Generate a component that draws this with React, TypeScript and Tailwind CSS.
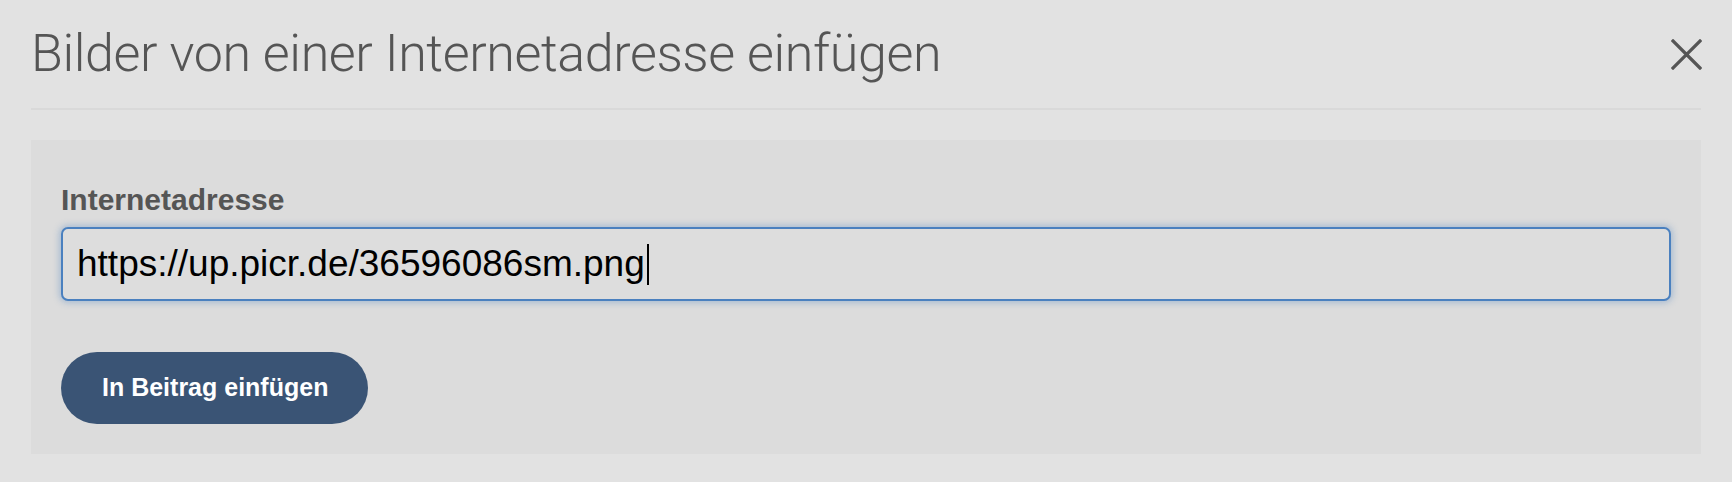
export default function App() {
  return (
    <div className="h-[482px] w-full bg-[#e2e2e2] px-[31px] font-['Liberation_Sans',Arial,sans-serif]">
      {/* header */}
      <div className="flex h-[110px] items-center justify-between border-b-2 border-[#d9d9d9]">
        <h1 className="font-['Roboto',sans-serif] text-[52px] font-light leading-[60px] tracking-[-0.4px] text-[#555555]">
          Bilder von einer Internetadresse einfügen
        </h1>
        <button className="mr-[-1px] flex h-[31px] w-[31px] items-center justify-center text-[#555555]">
          <svg width="31" height="31" viewBox="0 0 31 31" fill="none" stroke="currentColor" strokeWidth="3.2" strokeLinecap="square">
            <path d="M2 2L29 29M29 2L2 29" />
          </svg>
        </button>
      </div>

      {/* form panel */}
      <div className="mt-[30px] h-[314px] bg-[#dcdcdc] px-[30px] pt-[45px]">
        <label className="block text-[30px] font-bold leading-[30px] text-[#555555]">Internetadresse</label>
        <div className="mt-[12px] flex h-[74px] items-center rounded-[7px] border-2 border-[#4a80bf] bg-[#dddddd] pl-[14px] shadow-[0_0_6px_2px_rgba(74,128,191,0.35)]">
          <span className="text-[37px] leading-[40px] text-black">https://up.picr.de/36596086sm.png</span>
          <span className="ml-[2px] h-[41px] w-[2px] bg-black" />
        </div>
        <button className="mt-[51px] flex h-[72px] w-[307px] items-center rounded-full bg-[#3a5475] pl-[41px] text-[25px] font-bold text-white">
          In Beitrag einfügen
        </button>
      </div>
    </div>
  );
}
